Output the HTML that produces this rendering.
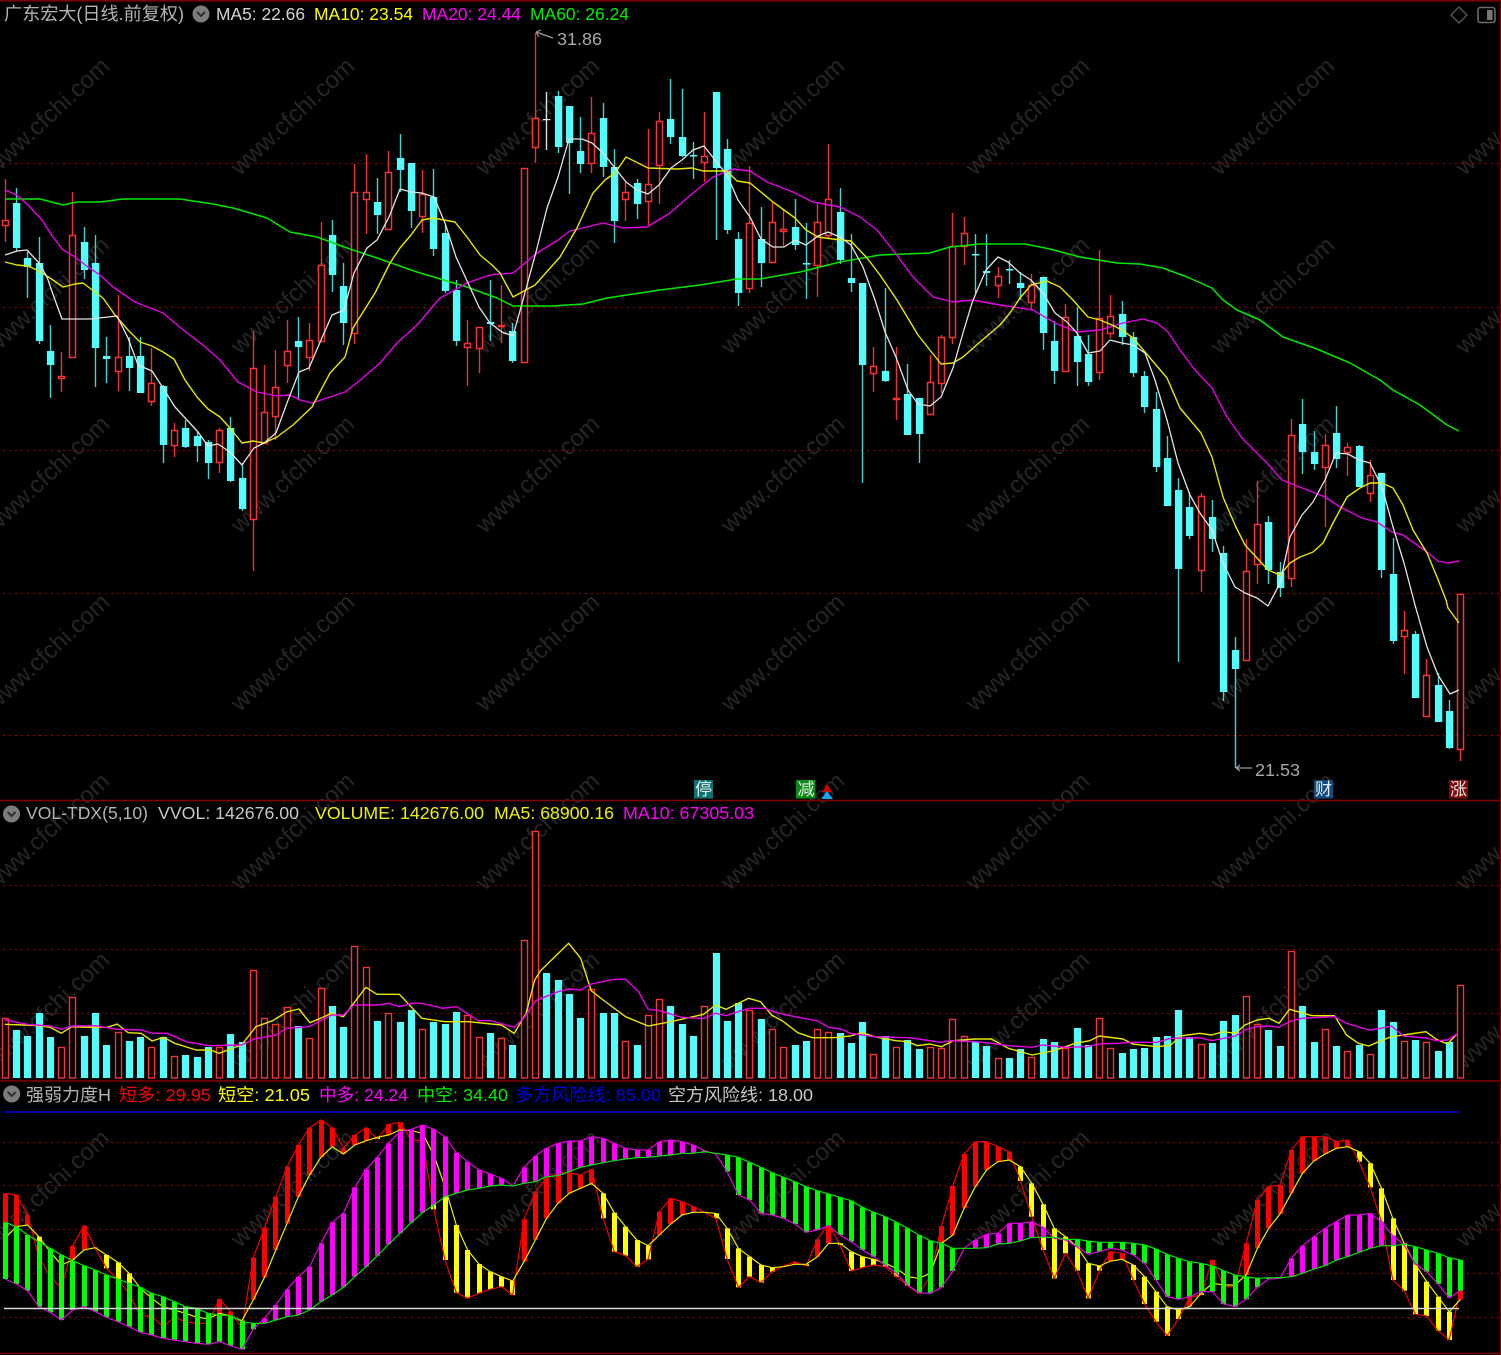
<!DOCTYPE html>
<html lang="zh"><head><meta charset="utf-8"><title>广东宏大</title>
<style>
html,body{margin:0;padding:0;background:#000;width:1501px;height:1355px;overflow:hidden}
svg{display:block;position:absolute;left:0;top:0}
text{font-family:"Liberation Sans","Noto Sans CJK SC",sans-serif;font-size:17.5px}
.wm text{font-size:24px;fill:#262626;text-anchor:end}
.b{font-size:17px;text-anchor:middle;fill:#e4ecec}
</style></head><body>
<svg id="s" width="1501" height="1355" viewBox="0 0 1501 1355" xmlns="http://www.w3.org/2000/svg">
<rect width="1501" height="1355" fill="#000"/>
<g class="wm" transform="translate(-5 -2)">
<text transform="translate(116 70) rotate(-43)">www.cfchi.com</text><text transform="translate(361 70) rotate(-43)">www.cfchi.com</text><text transform="translate(606 70) rotate(-43)">www.cfchi.com</text><text transform="translate(851 70) rotate(-43)">www.cfchi.com</text><text transform="translate(1096 70) rotate(-43)">www.cfchi.com</text><text transform="translate(1341 70) rotate(-43)">www.cfchi.com</text><text transform="translate(1586 70) rotate(-43)">www.cfchi.com</text>
<text transform="translate(116 249) rotate(-43)">www.cfchi.com</text><text transform="translate(361 249) rotate(-43)">www.cfchi.com</text><text transform="translate(606 249) rotate(-43)">www.cfchi.com</text><text transform="translate(851 249) rotate(-43)">www.cfchi.com</text><text transform="translate(1096 249) rotate(-43)">www.cfchi.com</text><text transform="translate(1341 249) rotate(-43)">www.cfchi.com</text><text transform="translate(1586 249) rotate(-43)">www.cfchi.com</text>
<text transform="translate(116 428) rotate(-43)">www.cfchi.com</text><text transform="translate(361 428) rotate(-43)">www.cfchi.com</text><text transform="translate(606 428) rotate(-43)">www.cfchi.com</text><text transform="translate(851 428) rotate(-43)">www.cfchi.com</text><text transform="translate(1096 428) rotate(-43)">www.cfchi.com</text><text transform="translate(1341 428) rotate(-43)">www.cfchi.com</text><text transform="translate(1586 428) rotate(-43)">www.cfchi.com</text>
<text transform="translate(116 606) rotate(-43)">www.cfchi.com</text><text transform="translate(361 606) rotate(-43)">www.cfchi.com</text><text transform="translate(606 606) rotate(-43)">www.cfchi.com</text><text transform="translate(851 606) rotate(-43)">www.cfchi.com</text><text transform="translate(1096 606) rotate(-43)">www.cfchi.com</text><text transform="translate(1341 606) rotate(-43)">www.cfchi.com</text><text transform="translate(1586 606) rotate(-43)">www.cfchi.com</text>
<text transform="translate(116 785) rotate(-43)">www.cfchi.com</text><text transform="translate(361 785) rotate(-43)">www.cfchi.com</text><text transform="translate(606 785) rotate(-43)">www.cfchi.com</text><text transform="translate(851 785) rotate(-43)">www.cfchi.com</text><text transform="translate(1096 785) rotate(-43)">www.cfchi.com</text><text transform="translate(1341 785) rotate(-43)">www.cfchi.com</text><text transform="translate(1586 785) rotate(-43)">www.cfchi.com</text>
<text transform="translate(116 964) rotate(-43)">www.cfchi.com</text><text transform="translate(361 964) rotate(-43)">www.cfchi.com</text><text transform="translate(606 964) rotate(-43)">www.cfchi.com</text><text transform="translate(851 964) rotate(-43)">www.cfchi.com</text><text transform="translate(1096 964) rotate(-43)">www.cfchi.com</text><text transform="translate(1341 964) rotate(-43)">www.cfchi.com</text><text transform="translate(1586 964) rotate(-43)">www.cfchi.com</text>
<text transform="translate(116 1142) rotate(-43)">www.cfchi.com</text><text transform="translate(361 1142) rotate(-43)">www.cfchi.com</text><text transform="translate(606 1142) rotate(-43)">www.cfchi.com</text><text transform="translate(851 1142) rotate(-43)">www.cfchi.com</text><text transform="translate(1096 1142) rotate(-43)">www.cfchi.com</text><text transform="translate(1341 1142) rotate(-43)">www.cfchi.com</text><text transform="translate(1586 1142) rotate(-43)">www.cfchi.com</text>
</g>
<g id="grid"></g>
<g id="main"></g>
<g id="vol"></g>
<g id="ind"></g>
<!-- frame -->
<path d="M0 .75H1501M0 800.5H1501M0 1081H1501M0 1353.5H1501" stroke="#800000" stroke-width="1.6" fill="none"/>
<path d="M1500.5 0V1355" stroke="#800000" stroke-width="1" fill="none"/>
<!-- header line 1 -->
<text x="4" y="20" fill="#b4b4b4" font-size="18" style="font-size:18px" textLength="180" lengthAdjust="spacingAndGlyphs">广东宏大(日线.前复权)</text>
<circle cx="201" cy="14" r="8.5" fill="#7c7c7c"/><path d="M197 12l4 4 4-4" fill="none" stroke="#2e2e2e" stroke-width="2"/>
<text x="216" y="20" fill="#d4d4d4" textLength="89" lengthAdjust="spacingAndGlyphs">MA5: 22.66</text>
<text x="314" y="20" fill="#ffff00" textLength="99" lengthAdjust="spacingAndGlyphs">MA10: 23.54</text>
<text x="422" y="20" fill="#ff00ff" textLength="99" lengthAdjust="spacingAndGlyphs">MA20: 24.44</text>
<text x="530" y="20" fill="#00ee00" textLength="99" lengthAdjust="spacingAndGlyphs">MA60: 26.24</text>
<path d="M1459 7l8 8-8 8-8-8z" fill="none" stroke="#5c5c5c" stroke-width="1.3"/>
<rect x="1478" y="7.5" width="17" height="15" rx="2.5" fill="none" stroke="#6a6a6a" stroke-width="1.6"/><rect x="1487" y="10" width="5.5" height="10" fill="#777"/>
<!-- hi/lo labels -->
<path d="M553 38L536 32M536 32l5-2M536 32l3 5" fill="none" stroke="#9c9c9c" stroke-width="1.2"/>
<text x="557" y="45" fill="#a8a8a8" textLength="45" lengthAdjust="spacingAndGlyphs">31.86</text>
<path d="M1252 768H1236M1236 768l4-3M1236 768l4 3" fill="none" stroke="#9c9c9c" stroke-width="1.2"/>
<text x="1255" y="776" fill="#a8a8a8" textLength="45" lengthAdjust="spacingAndGlyphs">21.53</text>
<!-- badges -->
<rect x="694" y="780" width="19" height="18.5" fill="#0e7272"/><text class="b" x="703.5" y="795" style="font-size:17px">停</text>
<rect x="796" y="780" width="19.5" height="18.5" fill="#0b8a16"/><text class="b" x="806" y="795" style="font-size:17px">减</text>
<path d="M827 784l5 8h-10z" fill="#d00000"/><path d="M827 791l6 8h-12z" fill="#18a0f0"/>
<rect x="1314" y="780" width="19" height="18.5" fill="#124a80"/><text class="b" x="1323.5" y="795" style="font-size:17px">财</text>
<rect x="1449" y="780" width="19" height="18.5" rx="1" fill="#800808"/><text class="b" x="1458.5" y="795" style="font-size:17px">涨</text>
<!-- header line 2 -->
<circle cx="11.5" cy="814" r="8.5" fill="#7c7c7c"/><path d="M7.5 812l4 4 4-4" fill="none" stroke="#2e2e2e" stroke-width="2"/>
<text x="26" y="819" fill="#b4b4b4" textLength="122" lengthAdjust="spacingAndGlyphs">VOL-TDX(5,10)</text>
<text x="158" y="819" fill="#c8c8c8" textLength="141" lengthAdjust="spacingAndGlyphs">VVOL: 142676.00</text>
<text x="315" y="819" fill="#f0f000" textLength="169" lengthAdjust="spacingAndGlyphs">VOLUME: 142676.00</text>
<text x="494" y="819" fill="#f0f000" textLength="120" lengthAdjust="spacingAndGlyphs">MA5: 68900.16</text>
<text x="623" y="819" fill="#ff00ff" textLength="131" lengthAdjust="spacingAndGlyphs">MA10: 67305.03</text>
<!-- header line 3 -->
<circle cx="11.7" cy="1094" r="8.5" fill="#7c7c7c"/><path d="M7.7 1092l4 4 4-4" fill="none" stroke="#2e2e2e" stroke-width="2"/>
<text x="26" y="1101" fill="#b4b4b4" textLength="85" lengthAdjust="spacingAndGlyphs">强弱力度H</text>
<text x="119" y="1101" fill="#ff0000" textLength="92" lengthAdjust="spacingAndGlyphs">短多: 29.95</text>
<text x="218" y="1101" fill="#ffff00" textLength="92" lengthAdjust="spacingAndGlyphs">短空: 21.05</text>
<text x="319" y="1101" fill="#ff00ff" textLength="89" lengthAdjust="spacingAndGlyphs">中多: 24.24</text>
<text x="417" y="1101" fill="#00ee00" textLength="91" lengthAdjust="spacingAndGlyphs">中空: 34.40</text>
<text x="515" y="1101" fill="#0000f0" textLength="146" lengthAdjust="spacingAndGlyphs">多方风险线: 85.00</text>
<text x="668" y="1101" fill="#c8c8c8" textLength="145" lengthAdjust="spacingAndGlyphs">空方风险线: 18.00</text>
</svg>
<script>
var X=function(i){return 4.7+11.283*i},NS='http://www.w3.org/2000/svg';
function el(p,t,a){var e=document.createElementNS(NS,t);for(var k in a)e.setAttribute(k,a[k]);p.appendChild(e);return e}
function pl(p,a,c,w){var s='';for(var i=0;i<a.length;i+=2)s+=a[i].toFixed(1)+','+a[i+1].toFixed(1)+' ';el(p,'polyline',{points:s,fill:'none',stroke:c,'stroke-width':w||1.2,'stroke-linejoin':'round'})}
var G=document.getElementById('grid');
[163.5,307.5,450.5,593.5,735.5,885.5,949.5,1013.5,1142.5,1185.5,1229.5,1273.5,1317.5].forEach(function(y){el(G,'line',{x1:3,x2:1500,y1:y,y2:y,stroke:'#a00000','stroke-width':1,'stroke-dasharray':'2 4','shape-rendering':'crispEdges'})});
/* candles: colour(0 red,1 cyan,2 white),high,top,bottom,low */
var C=[[0,179,220,225,242],[1,188,203,248,252],[1,252,258,267,298],[1,237,263,341,344],[1,325,351,365,398],[0,352,376,378,392],[0,192,235,357,357],[1,227,242,270,279],[1,235,263,348,387],[1,337,356,359,383],
[0,295,357,371,391],[1,337,356,368,391],[1,337,356,393,393],[0,348,383,401,406],[1,385,386,445,463],[0,423,430,445,457],[1,420,428,447,448],[1,432,436,446,462],[1,440,442,463,479],[0,428,430,462,473],
[1,417,428,481,482],[1,463,478,509,511],[0,331,368,519,571],[0,365,412,443,443],[0,350,387,416,440],[0,320,351,365,383],[1,317,341,347,400],[0,323,340,357,371],[0,222,265,341,341],[1,220,235,275,292],
[1,263,286,323,345],[0,164,192,333,344],[0,154,192,199,234],[1,178,202,215,234],[0,151,172,229,229],[1,134,158,170,192],[1,163,163,211,228],[0,170,194,216,233],[1,169,197,249,256],[1,225,233,291,293],
[1,280,290,341,346],[0,320,343,347,386],[0,327,327,348,373],[1,280,322,324,341],[0,285,325,326,343],[1,323,331,361,363],[0,168,168,362,362],[0,33,118,147,163],[2,92,119,120,150],[1,91,96,147,153],
[1,106,106,143,194],[1,117,151,164,173],[0,97,133,163,173],[1,103,118,167,177],[1,149,167,221,243],[0,182,192,199,221],[1,179,183,204,219],[0,129,184,201,225],[0,112,121,165,204],[1,79,119,137,144],
[1,89,137,156,157],[1,142,155,156,179],[0,112,156,162,182],[1,92,92,168,240],[1,139,149,230,234],[1,232,239,293,306],[0,166,223,288,293],[1,207,239,263,287],[0,201,222,262,262],[0,209,229,231,246],
[1,199,227,245,250],[1,223,263,264,299],[0,204,222,265,297],[0,144,199,235,239],[1,188,212,260,264],[1,234,278,283,292],[1,283,283,365,483],[0,347,366,373,392],[1,288,371,381,382],[0,347,398,399,420],
[1,364,394,435,435],[1,398,398,434,463],[0,355,382,414,414],[0,335,337,383,393],[0,213,246,337,344],[0,217,233,246,265],[1,234,254,255,293],[1,234,271,273,286],[0,267,276,285,298],[1,260,269,270,284],
[1,272,283,288,300],[0,274,285,302,310],[1,277,277,333,350],[1,321,341,371,384],[0,304,317,371,371],[1,307,336,362,386],[1,335,354,382,386],[0,250,318,372,380],[0,295,316,333,338],[1,301,314,337,345],
[1,332,337,373,377],[1,371,376,407,413],[1,392,409,467,472],[1,436,458,506,506],[1,478,490,569,662],[1,492,507,536,539],[0,493,496,570,592],[1,500,517,539,552],[1,546,553,692,701],[1,637,650,669,768],
[0,539,571,660,660],[0,481,524,564,584],[1,516,522,570,584],[1,562,572,588,597],[0,419,435,578,587],[1,399,424,452,474],[1,431,452,464,470],[0,434,445,467,527],[1,406,433,459,468],[0,443,447,452,476],
[1,445,446,487,487],[0,460,475,493,502],[1,473,473,570,578],[1,538,574,641,644],[0,611,630,636,674],[1,631,634,698,698],[0,659,675,716,716],[1,673,685,722,722],[1,700,711,748,749],[0,594,594,749,761]];
var M=document.getElementById('main');
C.forEach(function(c,i){var x=Math.round(X(i))+.5,k=c[0];
 var wc=k==0?'#f03030':k==1?'#40d4d4':'#e0e0e0',bc=k==0?'#f83232':k==1?'#54fcfc':'#e8e8e8';
 if(c[2]>c[1])el(M,'line',{x1:x,x2:x,y1:c[1],y2:c[2],stroke:wc,'stroke-width':1.4});
 if(c[4]>c[3])el(M,'line',{x1:x,x2:x,y1:c[3],y2:c[4],stroke:wc,'stroke-width':1.4});
 if(k==0){el(M,'rect',{x:x-3,y:c[2]+.5,width:6,height:Math.max(c[3]-c[2],1),fill:'#000',stroke:bc,'stroke-width':1.5})}
 else if(k==1){el(M,'rect',{x:x-3.6,y:c[2],width:7.4,height:Math.max(c[3]-c[2],1.5),fill:bc})}
 else{el(M,'rect',{x:x-3.6,y:c[2],width:7.4,height:1.2,fill:bc})}
});
pl(M,[5,199,40,199,63,205,77,202,100,202,123,199,180,199,213,204,233,208,267,218,290,232,317,237,350,249,377,258,417,272,467,287,497,298,513,306,552,306,583,304,607,298,660,290,700,285,737,279,760,279,800,272,840,262,880,255,930,253,950,247,980,244,1025,244,1050,249,1080,257,1117,263,1140,264,1163,268,1187,277,1212,288,1223,300,1237,310,1260,320,1283,337,1317,349,1350,363,1380,380,1393,390,1420,405,1447,425,1459,431],'#00e800',1.5);
pl(M,[5,190,17,195,28,205,42,220,53,237,62,249,75,257,88,267,100,275,113,287,135,302,163,313,187,333,203,345,220,360,238,382,257,392,277,396,290,395,300,400,312,403,345,392,358,382,380,363,397,343,417,325,440,298,467,283,490,275,513,273,537,253,558,240,570,231,587,227,603,223,623,228,647,227,670,213,693,193,713,177,733,169,750,171,767,182,793,192,813,202,840,207,860,217,877,230,893,250,913,277,933,297,953,302,972,300,1000,305,1033,310,1055,323,1077,332,1100,330,1123,323,1143,319,1157,323,1168,332,1180,350,1195,370,1212,388,1227,417,1242,438,1267,463,1282,480,1310,491,1325,497,1340,507,1362,518,1377,522,1392,532,1403,535,1427,552,1438,561,1448,563,1459,561],'#e800e8',1.4);
pl(M,[5,262,17,265,28,266,39,271,50,278,63,287,75,284,83,283,95,292,103,298,115,315,128,330,140,342,152,346,163,352,174,359,185,380,197,397,208,409,220,417,230,428,242,443,253,441,264,443,277,437,293,425,312,407,330,373,345,357,353,328,375,293,390,263,400,248,411,235,422,220,433,218,455,222,467,237,480,255,492,265,500,273,513,297,535,285,560,257,577,228,593,193,605,180,615,173,626,157,648,168,677,169,692,168,703,171,727,171,737,181,750,183,773,202,795,218,806,230,818,237,833,239,851,241,867,258,880,275,897,300,918,335,941,364,953,363,963,357,980,342,1000,325,1010,313,1020,298,1031,285,1047,281,1060,287,1073,300,1080,308,1088,317,1100,320,1112,325,1122,330,1133,338,1145,352,1167,378,1180,408,1201,433,1212,457,1223,497,1235,525,1245,545,1257,558,1268,570,1280,575,1290,563,1300,557,1313,552,1323,543,1333,523,1347,497,1360,488,1370,483,1382,483,1393,488,1403,505,1413,530,1427,553,1437,577,1446,600,1448,608,1459,623],'#e8e800',1.4);
pl(M,[5,255,17,251,27,250,39,263,47,277,55,300,62,319,90,319,117,316,128,338,138,365,152,371,163,388,175,407,187,420,198,432,208,446,218,444,230,452,242,465,254,448,264,443,276,433,287,403,299,372,309,368,321,340,332,315,344,310,354,273,367,248,377,240,389,217,400,189,411,192,422,193,434,197,445,223,456,257,468,283,479,307,490,323,502,332,513,336,523,300,536,252,547,208,558,177,569,139,582,139,592,143,603,153,615,168,626,182,637,190,648,194,659,185,671,168,682,160,693,150,704,146,715,160,727,175,738,200,750,217,761,239,773,247,784,247,795,240,806,245,818,236,828,232,840,237,851,245,863,267,875,300,885,332,896,357,908,390,918,404,930,406,941,397,953,368,963,333,972,303,976,293,986,270,998,257,1008,262,1020,273,1031,280,1043,293,1055,313,1067,322,1077,333,1088,353,1100,351,1110,340,1122,343,1133,345,1145,353,1155,380,1167,420,1178,463,1190,495,1200,513,1212,530,1223,563,1235,587,1245,593,1257,598,1268,606,1280,583,1290,537,1302,515,1313,502,1325,480,1336,453,1348,454,1359,460,1370,463,1382,487,1393,527,1404,563,1415,605,1427,647,1438,675,1450,694,1459,690],'#e4e4e4',1.3);
/* volume: negative = red */
var V=[-1018,1030,1036,1013,1037,-1047,-997,1036,1013,1045,-1032,1041,1037,-1047,1037,-1056,1055,1057,1047,-1047,1034,1042,-970,-1018,-1024,-1007,1026,-1038,-988,1006,1027,-946,-967,1021,-1013,1022,1010,-1029,1022,1024,1012,-1015,-1037,1033,-1038,1045,-940,-831,973,980,994,1018,-989,1013,1013,-1041,1045,-1015,-999,1006,1024,1036,-1006,953,1021,1003,-1010,1019,-1029,-1047,1045,1041,-1029,-1032,1033,1043,1022,-1054,1036,-1047,1040,1049,-1047,-1048,-1019,-1036,1042,1046,-1058,1058,1049,-1057,1039,1042,-1048,1028,1045,-1018,-1048,1053,1049,1048,1037,1036,1010,1037,-1044,1043,1021,1015,-996,-1024,1030,1046,-951,1006,1042,-1029,1046,-1051,1045,-1054,1010,1022,-1041,1040,-1042,1051,1042,-985];
var VG=document.getElementById('vol');
V.forEach(function(v,i){var x=Math.round(X(i))+.5,t=Math.abs(v);
 if(v<0)el(VG,'rect',{x:x-3,y:t+.5,width:6,height:1077.5-t,fill:'#000',stroke:'#f83232','stroke-width':1.4});
 else el(VG,'rect',{x:x-3.6,y:t,width:7.2,height:1078-t,fill:'#54fcfc'});
});
function zv(a,b){var r=[];for(var i=0;i<a.length;i+=2)r.push(a[i]/2.0907,780+a[i+1]/3);for(i=0;i<b.length;i+=2)r.push(750+b[i]/2.0907,780+b[i+1]/3);return r}
pl(VG,zv([10,733,50,735,80,737,105,742,128,760,150,740,180,742,225,742,245,732,268,758,295,760,318,783,342,772,365,790,410,810,440,810,458,820,505,795,535,740,570,722,600,695,625,687,648,728,670,715,693,700,718,710,765,622,788,643,835,643,882,715,930,725,980,725,1048,735,1075,760,1100,700,1118,600,1130,572,1189,490,1214,535,1236,632,1261,660,1308,710,1355,738,1402,725,1449,710,1471,703,1496,675,1518,688,1565,655],[22,665,45,705,70,725,100,758,130,773,175,773,210,768,235,758,260,770,305,782,330,785,350,797,376,792,400,800,425,782,470,777,505,777,540,805,590,825,635,812,680,790,710,782,730,768,780,777,800,792,850,800,880,795,900,768,940,760,965,765,990,755,1015,760,1035,735,1060,720,1085,715,1106,730,1128,688,1175,707,1222,707,1247,765,1272,790,1294,798,1319,782,1341,770,1366,765,1413,755,1435,778,1458,792,1478,762]),'#e8e800',1.4);
pl(VG,zv([10,720,57,733,104,738,129,748,151,738,198,737,245,748,295,750,318,760,350,760,389,785,436,797,505,795,530,778,577,765,599,745,646,740,693,705,718,705,740,675,788,675,812,670,835,680,860,670,882,670,925,685,955,680,1000,722,1026,722,1075,742,1095,715,1120,662,1167,635,1189,627,1214,630,1236,612,1283,598,1308,598,1335,635,1355,688,1380,692,1424,712,1471,716,1496,700,1518,707,1565,685],[30,685,60,700,105,713,140,722,165,742,190,747,210,760,258,770,330,773,352,777,398,787,420,782,470,785,505,790,540,797,590,802,611,795,660,802,705,800,730,792,770,790,800,787,850,787,880,775,940,773,965,782,1015,768,1035,750,1059,740,1085,738,1106,742,1128,725,1153,715,1222,710,1247,730,1294,750,1319,745,1341,738,1366,768,1413,774,1435,782,1458,780,1478,762]),'#e800e8',1.4);
/* indicator: S(red),Y(yellow),M(magenta),G(green) in zoom y units */
var D=[[340,475,597,427],[345,440,612,440],[405,435,632,465],[530,470,680,485],[590,515,697,505],[625,555,720,525],[497,540,690,542],[437,510,680,557],[505,503,695,570],[565,525,712,585],
[600,547,725,597],[640,580,740,610],[708,625,757,622],[708,655,765,640],[740,680,775,650],[712,690,780,665],[725,700,785,680],[730,712,790,685],[730,716,793,700],[657,700,785,705],
[695,708,797,707],[745,722,808,725],[533,660,748,730],[443,592,715,730],[350,510,675,720],[260,430,628,710],[195,350,590,705],[143,285,560,690],[120,232,490,665],[143,200,427,645],
[205,222,400,622],[165,195,322,590],[143,182,268,560],[177,172,232,527],[133,165,190,493],[127,150,155,460],[180,152,148,428],[182,160,135,398],[388,225,148,375],[540,320,170,350],
[638,435,218,340],[655,510,245,330],[640,552,270,325],[628,575,282,318],[620,590,295,315],[645,603,318,318],[418,545,262,310],[335,480,228,305],[295,415,205,290],[280,370,190,287],
[278,340,183,275],[285,325,183,262],[268,310,170,255],[415,340,175,248],[515,398,190,242],[527,440,205,237],[560,480,210,233],[538,497,210,232],[395,465,185,228],[355,432,180,225],
[365,405,185,220],[380,397,195,220],[397,397,212,215],[415,400,222,220],[537,445,275,225],[622,505,345,232],[590,530,360,247],[608,555,400,262],[575,563,405,278],[558,560,415,292],
[545,553,432,305],[558,553,457,320],[478,530,450,332],[432,490,437,342],[495,490,465,352],[573,515,485,362],[563,530,510,382],[555,538,530,397],[560,550,555,410],[590,565,580,427],
[617,590,615,445],[640,595,638,465],[590,580,640,482],[438,490,622,490],[318,465,573,505],[222,385,505,505],[185,320,480,505],[185,270,463,503],[200,245,460,492],[215,240,430,490],
[303,260,430,483],[410,310,425,472],[510,373,442,472],[595,445,475,472],[520,470,480,478],[572,500,500,478],[655,550,522,483],[572,558,515,487],[515,543,505,487],[520,538,510,487],
[600,555,525,490],[672,590,550,495],[725,635,600,507],[767,680,650,523],[717,690,658,535],[652,680,650,545],[645,640,635,550],[540,610,635,558],[620,615,672,572],[620,615,680,585],
[490,585,658,590],[360,505,622,595],[320,445,597,593],[315,402,595,593],[210,340,535,590],[170,280,497,580],[170,243,470,567],[170,222,445,557],[185,205,425,540],[180,200,405,530],
[245,215,405,517],[322,250,400,505],[425,325,425,497],[600,415,467,497],[632,490,495,493],[703,553,552,500],[708,605,575,510],[752,650,612,520],[780,695,653,533],[628,658,632,540]];
var I=document.getElementById('ind'),Yf=function(z){return 1080+z/3};
function ser(k){var r=[];D.forEach(function(d,i){r.push(X(i)+.3,Yf(d[k]))});return r}
function bars(a,b,c1,c2){D.forEach(function(d,i){var p=d[a],q=d[b],t=Math.min(p,q),h=Math.abs(p-q);if(h<1)return;
 el(I,'rect',{x:Math.round(X(i))-2,y:Yf(t),width:5,height:h/3,fill:p<q?c1:c2})})}
bars(0,1,'#ff0000','#ffff00');
pl(I,ser(0),'#f00000',1.2);pl(I,ser(1),'#eeee00',1.2);
bars(2,3,'#ff00ff','#00ff00');
pl(I,ser(2),'#e800e8',1.2);pl(I,ser(3),'#00e800',1.2);
el(I,'line',{x1:4,x2:1459,y1:1112,y2:1112,stroke:'#0000e0','stroke-width':1.5});
el(I,'line',{x1:4,x2:1459,y1:1308.5,y2:1308.5,stroke:'#d8d8d8','stroke-width':1.6});
</script>
</body></html>
